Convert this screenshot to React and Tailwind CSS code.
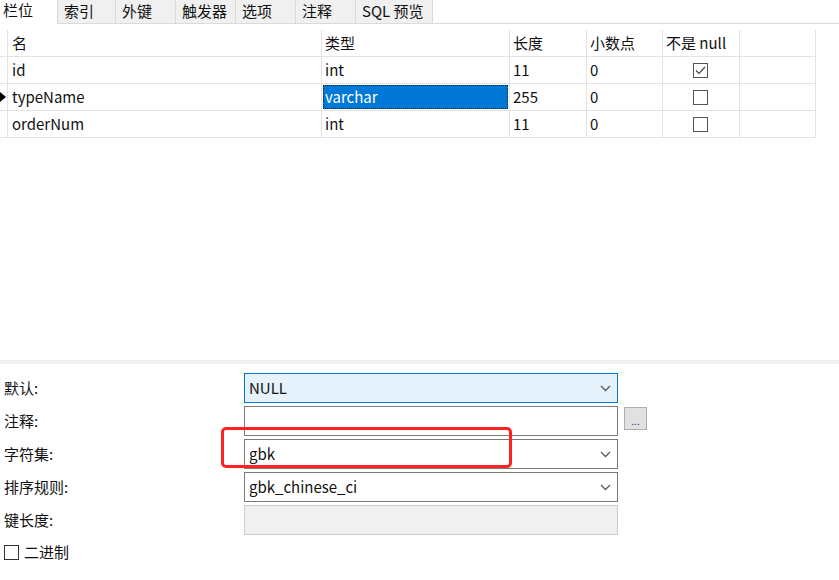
import React from "react";

const font = { fontFamily: '"Noto Sans CJK SC", "Noto Sans", sans-serif' };

const tabs = ["索引", "外键", "触发器", "选项", "注释", "SQL 预览"];
const tabWidths = ["w-[58px]", "w-[60px]", "w-[60px]", "w-[60px]", "w-[60px]", "w-[77px]"];

const columns = [
  { label: "名", w: "w-[314px]" },
  { label: "类型", w: "w-[188px]" },
  { label: "长度", w: "w-[77px]" },
  { label: "小数点", w: "w-[76px]" },
  { label: "不是 null", w: "w-[77px]" },
  { label: "", w: "w-[76px]" },
];

const rows = [
  { name: "id", type: "int", len: "11", dec: "0", notNull: true },
  { name: "typeName", type: "varchar", len: "255", dec: "0", notNull: false, current: true },
  { name: "orderNum", type: "int", len: "11", dec: "0", notNull: false },
];

const Chevron = () => (
  <svg width="11" height="7" viewBox="0 0 11 7" className="mr-[6px]">
    <polyline points="1,1 5.5,5.5 10,1" fill="none" stroke="#5a5a5a" strokeWidth="1.3" />
  </svg>
);

const CheckBox = ({ checked }) => (
  <div className="w-[15px] h-[15px] border border-[#555] bg-white flex items-center justify-center">
    {checked && (
      <svg width="11" height="9" viewBox="0 0 11 9">
        <polyline points="1,4.5 4,7.5 10,1" fill="none" stroke="#444" strokeWidth="1.2" />
      </svg>
    )}
  </div>
);

const Cell = ({ w, children, className = "" }) => (
  <div className={`${w} h-full border-r border-[#e3e3e3] flex items-center shrink-0 ${className}`}>
    {children}
  </div>
);

export default function App() {
  return (
    <div className="w-[839px] h-[580px] bg-white text-[15px] text-[#111] overflow-hidden" style={font}>
      {/* tab strip */}
      <div className="flex h-[24px]">
        <div className="w-[57px] pt-[2px] pl-[3px] leading-[16px]">栏位</div>
        <div className="flex flex-1 border-b border-[#dadada]">
          {tabs.map((t, i) => (
            <div
              key={t}
              className={`${tabWidths[i]} h-full bg-[#f0f0f0] border-l border-[#dadada] pl-[6px] flex items-center`}
            >
              {t}
            </div>
          ))}
          <div className="w-[1px] h-full bg-[#dadada]" />
        </div>
      </div>

      {/* grid */}
      <div className="mt-[6px] w-[816px]">
        <div className="flex h-[27px] border-b border-[#e3e3e3]">
          <Cell w="w-[8px]" />
          {columns.map((c, i) => (
            <Cell key={i} w={c.w} className={i === 0 ? "pl-[4px]" : "pl-[3px]"}>
              {c.label}
            </Cell>
          ))}
        </div>
        {rows.map((r) => (
          <div key={r.name} className="flex h-[27px] border-b border-[#e3e3e3]">
            <Cell w="w-[8px]">
              {r.current && (
                <svg width="6" height="10" viewBox="0 0 6 10">
                  <polygon points="0,0 6,5 0,10" fill="#000" />
                </svg>
              )}
            </Cell>
            <Cell w="w-[314px]" className="pl-[4px]">{r.name}</Cell>
            <Cell w="w-[188px]" className={r.current ? "p-[1px]" : "pl-[3px]"}>
              {r.current ? (
                <div className="w-full h-full bg-[#0078d7] text-white border border-dotted border-[#222] flex items-center pl-[1px]">
                  {r.type}
                </div>
              ) : (
                r.type
              )}
            </Cell>
            <Cell w="w-[77px]" className="pl-[3px]">{r.len}</Cell>
            <Cell w="w-[76px]" className="pl-[3px]">{r.dec}</Cell>
            <Cell w="w-[77px]" className="justify-center pr-[2px]">
              <CheckBox checked={r.notNull} />
            </Cell>
            <Cell w="w-[76px]" />
          </div>
        ))}
      </div>

      {/* splitter */}
      <div className="mt-[222px] h-[4px] bg-[#f0f0f0]" />

      {/* property form */}
      <div className="relative pt-[9px] flex flex-col gap-[3px]">
        <div className="flex h-[30px] items-center">
          <div className="w-[244px] pl-[4px]">默认:</div>
          <div className="w-[374px] h-full bg-[#e5f1fb] border border-[#0078d7] flex items-center justify-between pl-[4px]">
            <span>NULL</span>
            <Chevron />
          </div>
        </div>
        <div className="flex h-[30px] items-center">
          <div className="w-[244px] pl-[4px]">注释:</div>
          <div className="w-[374px] h-full bg-white border border-[#7a7a7a]" />
          <div className="ml-[6px] self-start mt-[1px] w-[23px] h-[23px] bg-[#e1e1e1] border border-[#adadad] flex items-end justify-center pb-[3px]">
            <span className="text-[10px] leading-[10px] text-[#203080]">...</span>
          </div>
        </div>
        <div className="flex h-[30px] items-center">
          <div className="w-[244px] pl-[4px]">字符集:</div>
          <div className="w-[374px] h-full bg-white border border-[#7a7a7a] flex items-center justify-between pl-[4px]">
            <span>gbk</span>
            <Chevron />
          </div>
        </div>
        <div className="flex h-[30px] items-center">
          <div className="w-[244px] pl-[4px]">排序规则:</div>
          <div className="w-[374px] h-full bg-white border border-[#7a7a7a] flex items-center justify-between pl-[4px]">
            <span>gbk_chinese_ci</span>
            <Chevron />
          </div>
        </div>
        <div className="flex h-[30px] items-center">
          <div className="w-[244px] pl-[4px]">键长度:</div>
          <div className="w-[374px] h-full bg-[#f0f0f0] border border-[#cccccc]" />
        </div>
        <div className="flex items-center mt-[3px] pl-[4px] gap-[5px]">
          <div className="w-[15px] h-[15px] border border-[#333] bg-white" />
          <span>二进制</span>
        </div>

        {/* red annotation box */}
        <div className="absolute left-[221px] top-[63px] w-[291px] h-[41px] border-[3px] border-[#ff2020] rounded-[5px] pointer-events-none" />
      </div>
    </div>
  );
}
